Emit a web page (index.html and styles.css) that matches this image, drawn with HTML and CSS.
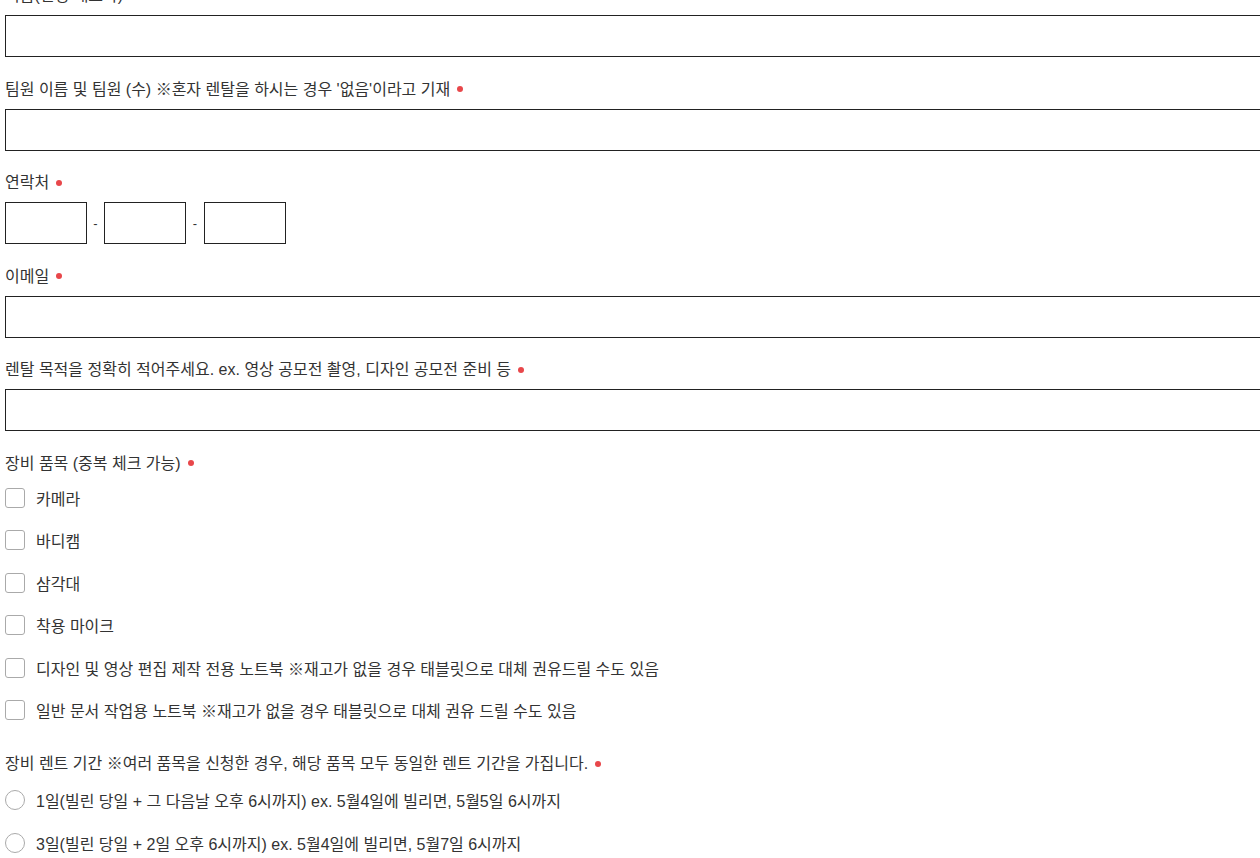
FILE: index.html
```html
<!DOCTYPE html>
<html lang="ko">
<head>
    <meta charset="UTF-8">
    <meta name="viewport" content="width=device-width, initial-scale=1.0">
    <title>장비 렌탈 신청</title>
    <link rel="stylesheet" href="styles.css">
</head>
<body>
    <form class="rental-form" id="rental-form">
        <div class="form-group">
            <label class="field-label" for="name">이름(신청 대표자)</label>
            <input class="text-input" type="text" id="name" name="name">
        </div>
        <div class="form-group">
            <label class="field-label" for="team">팀원 이름 및 팀원 (수) ※혼자 렌탈을 하시는 경우 '없음'이라고 기재<span class="required"></span></label>
            <input class="text-input" type="text" id="team" name="team" required>
        </div>
        <div class="form-group">
            <label class="field-label" for="phone1">연락처<span class="required"></span></label>
            <div class="phone-row">
                <input class="phone-input" type="text" id="phone1" name="phone1" required>
                <span class="dash">-</span>
                <input class="phone-input" type="text" id="phone2" name="phone2" required>
                <span class="dash">-</span>
                <input class="phone-input" type="text" id="phone3" name="phone3" required>
            </div>
        </div>
        <div class="form-group">
            <label class="field-label" for="email">이메일<span class="required"></span></label>
            <input class="text-input" type="text" id="email" name="email" required>
        </div>
        <div class="form-group">
            <label class="field-label" for="purpose">렌탈 목적을 정확히 적어주세요. ex. 영상 공모전 촬영, 디자인 공모전 준비 등<span class="required"></span></label>
            <input class="text-input" type="text" id="purpose" name="purpose" required>
        </div>
        <div class="form-group">
            <div class="field-label">장비 품목 (중복 체크 가능)<span class="required"></span></div>
            <div class="option-list">
                <label class="option"><input type="checkbox" name="item" value="camera"><span>카메라</span></label>
                <label class="option"><input type="checkbox" name="item" value="bodycam"><span>바디캠</span></label>
                <label class="option"><input type="checkbox" name="item" value="tripod"><span>삼각대</span></label>
                <label class="option"><input type="checkbox" name="item" value="mic"><span>착용 마이크</span></label>
                <label class="option"><input type="checkbox" name="item" value="laptop_pro"><span>디자인 및 영상 편집 제작 전용 노트북 ※재고가 없을 경우 태블릿으로 대체 권유드릴 수도 있음</span></label>
                <label class="option"><input type="checkbox" name="item" value="laptop"><span>일반 문서 작업용 노트북 ※재고가 없을 경우 태블릿으로 대체 권유 드릴 수도 있음</span></label>
            </div>
        </div>
        <div class="form-group">
            <div class="field-label">장비 렌트 기간 ※여러 품목을 신청한 경우, 해당 품목 모두 동일한 렌트 기간을 가집니다.<span class="required"></span></div>
            <div class="option-list radio-list">
                <label class="option"><input type="radio" name="period" value="1"><span>1일(빌린 당일 + 그 다음날 오후 6시까지) ex. 5월4일에 빌리면, 5월5일 6시까지</span></label>
                <label class="option"><input type="radio" name="period" value="3"><span>3일(빌린 당일 + 2일 오후 6시까지) ex. 5월4일에 빌리면, 5월7일 6시까지</span></label>
            </div>
        </div>
    </form>
</body>
</html>
```

FILE: styles.css
```css
html {
    overflow: hidden;
}
body {
    font-family: "Liberation Sans", "Noto Sans CJK KR", sans-serif;
    font-size: 16px;
    color: #333;
    margin: 0;
    padding: 0;
    background-color: #fff;
}
.rental-form {
    margin-top: -15px;
    padding-left: 5px;
}
.form-group {
    margin-bottom: 21.5px;
}
.field-label {
    display: flex;
    align-items: center;
    height: 21px;
    line-height: 21px;
    margin-bottom: 9px;
    white-space: nowrap;
}
.required {
    display: inline-block;
    width: 6px;
    height: 6px;
    margin-left: 7px;
    border-radius: 50%;
    background-color: #e8474a;
}
.text-input {
    display: block;
    width: 1300px;
    height: 42px;
    margin: 0;
    padding: 0 10px;
    box-sizing: border-box;
    border: 1px solid #222;
    font: inherit;
}
.phone-row {
    display: flex;
    align-items: center;
}
.phone-input {
    width: 82px;
    height: 42px;
    margin: 0;
    padding: 0 6px;
    box-sizing: border-box;
    border: 1px solid #222;
    font: inherit;
}
.dash {
    width: 17px;
    text-align: center;
    font-size: 13px;
}
.phone-input + .dash + .phone-input + .dash {
    width: 18px;
}
.option-list {
    margin-top: -6px;
}
.radio-list {
    margin-top: -4px;
}
.option {
    display: flex;
    align-items: center;
    height: 42.5px;
    white-space: nowrap;
}
.option input {
    appearance: none;
    width: 20px;
    height: 20px;
    margin: 0 11px 0 0;
    border: 1px solid #aaa;
    border-radius: 3px;
    background: #fff;
    flex-shrink: 0;
}
.option input[type="radio"] {
    border-radius: 50%;
}
```
